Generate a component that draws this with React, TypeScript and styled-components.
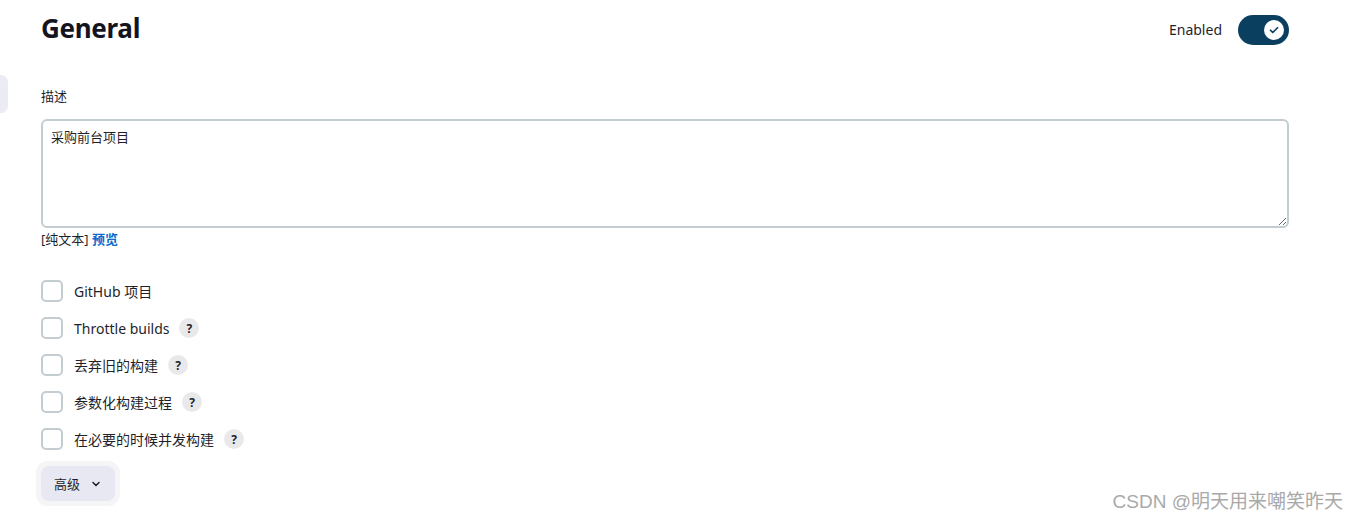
import React from "react";
import styled, { createGlobalStyle } from "styled-components";

const GlobalStyle = createGlobalStyle`
  html, body { margin: 0; padding: 0; background: #fff; }
  body {
    font-family: "Noto Sans", "Noto Sans CJK SC", sans-serif;
    color: #1f1f2b;
  }
  * { box-sizing: border-box; }
`;

const Page = styled.div`
  display: grid;
  grid-template-columns: 41px 1248px;
  width: 1359px;
  height: 521px;
  position: relative;
  overflow: hidden;
`;

const SideCol = styled.div`
  padding-top: 75px;
`;

const SideTab = styled.div`
  width: 8px;
  height: 38px;
  background: #ebecf3;
  border-radius: 0 7px 7px 0;
`;

const Main = styled.div`
  display: flex;
  flex-direction: column;
`;

const Header = styled.div`
  display: flex;
  align-items: center;
  justify-content: space-between;
  height: 58px;
  padding-top: 1px;
`;

const Title = styled.h1`
  margin: 0 0 3px 0;
  font-size: 26px;
  font-weight: 700;
  color: #14141f;
  letter-spacing: -0.3px;
`;

const ToggleWrap = styled.label`
  display: flex;
  align-items: center;
  gap: 16px;
  font-size: 14px;
  color: #1f1f2b;
`;

const Toggle = styled.span`
  display: inline-flex;
  align-items: center;
  justify-content: flex-end;
  width: 51px;
  height: 30px;
  border-radius: 15px;
  background: #0b3f60;
  padding: 0 5px;
`;

const Knob = styled.span`
  width: 20px;
  height: 20px;
  border-radius: 50%;
  background: #fff;
  display: flex;
  align-items: center;
  justify-content: center;
`;

const FieldLabel = styled.div`
  margin-top: 28px;
  font-size: 13px;
  line-height: 20px;
  color: #1f1f2b;
`;

const TextArea = styled.textarea`
  margin-top: 13px;
  width: 1248px;
  height: 109px;
  border: 2px solid #c3ccd1;
  border-radius: 6px;
  padding: 6px 8px;
  font-family: "Noto Sans", "Noto Sans CJK SC", sans-serif;
  font-size: 13px;
  line-height: 20px;
  color: #1f1f2b;
  resize: vertical;
  outline: none;
`;

const PreviewRow = styled.div`
  font-size: 13px;
  line-height: 20px;
  margin-top: 1px;
  color: #1f1f2b;
`;

const PreviewLink = styled.a`
  color: #0b6bcb;
  font-weight: 700;
  text-decoration: none;
`;

const CheckList = styled.div`
  display: flex;
  flex-direction: column;
  gap: 15px;
  margin-top: 31px;
`;

const CheckRow = styled.div`
  display: flex;
  align-items: center;
  height: 22px;
`;

const Box = styled.span`
  width: 22px;
  height: 22px;
  border: 2px solid #c3ccd1;
  border-radius: 5px;
  background: #fff;
  flex: none;
`;

const CheckText = styled.span`
  margin-left: 11px;
  font-size: 14px;
  color: #1f1f2b;
`;

const Help = styled.span`
  margin-left: 10px;
  width: 20px;
  height: 20px;
  border-radius: 50%;
  background: #e9e9ec;
  color: #1f1f2b;
  font-size: 12px;
  font-weight: 700;
  display: inline-flex;
  align-items: center;
  justify-content: center;
`;

const AdvancedHalo = styled.div`
  margin-top: 11px;
  margin-left: -5px;
  align-self: flex-start;
  padding: 5px;
  border-radius: 12px;
  background: #f5f5f7;
`;

const AdvancedButton = styled.button`
  display: flex;
  align-items: center;
  gap: 10px;
  width: 74px;
  height: 35px;
  padding: 0 0 0 13px;
  border: none;
  border-radius: 8px;
  background: #e8e8f2;
  font-family: "Noto Sans", "Noto Sans CJK SC", sans-serif;
  font-size: 13px;
  color: #1f1f2b;
`;

const Watermark = styled.div`
  position: absolute;
  right: 16px;
  bottom: 8px;
  font-family: "Liberation Sans", "Noto Sans CJK SC", sans-serif;
  font-size: 19px;
  color: #a9a9a9;
`;

const items: { label: string; help: boolean }[] = [
  { label: "GitHub 项目", help: false },
  { label: "Throttle builds", help: true },
  { label: "丢弃旧的构建", help: true },
  { label: "参数化构建过程", help: true },
  { label: "在必要的时候并发构建", help: true },
];

export default function App() {
  return (
    <>
      <GlobalStyle />
      <Page>
        <SideCol>
          <SideTab />
        </SideCol>
        <Main>
          <Header>
            <Title>General</Title>
            <ToggleWrap>
              Enabled
              <Toggle>
                <Knob>
                  <svg width="12" height="12" viewBox="0 0 24 24" fill="none" stroke="#0b3f60" strokeWidth="3.5" strokeLinecap="round" strokeLinejoin="round">
                    <path d="M5 12.5l4.5 4.5L19 7.5" />
                  </svg>
                </Knob>
              </Toggle>
            </ToggleWrap>
          </Header>
          <FieldLabel>描述</FieldLabel>
          <TextArea defaultValue="采购前台项目" />
          <PreviewRow>
            [纯文本] <PreviewLink href="#">预览</PreviewLink>
          </PreviewRow>
          <CheckList>
            {items.map((it) => (
              <CheckRow key={it.label}>
                <Box />
                <CheckText>{it.label}</CheckText>
                {it.help && <Help>?</Help>}
              </CheckRow>
            ))}
          </CheckList>
          <AdvancedHalo>
            <AdvancedButton>
              高级
              <svg width="12" height="12" viewBox="0 0 24 24" fill="none" stroke="#1f1f2b" strokeWidth="3" strokeLinecap="round" strokeLinejoin="round">
                <path d="M6 9l6 6 6-6" />
              </svg>
            </AdvancedButton>
          </AdvancedHalo>
        </Main>
        <Watermark>CSDN @明天用来嘲笑昨天</Watermark>
      </Page>
    </>
  );
}
